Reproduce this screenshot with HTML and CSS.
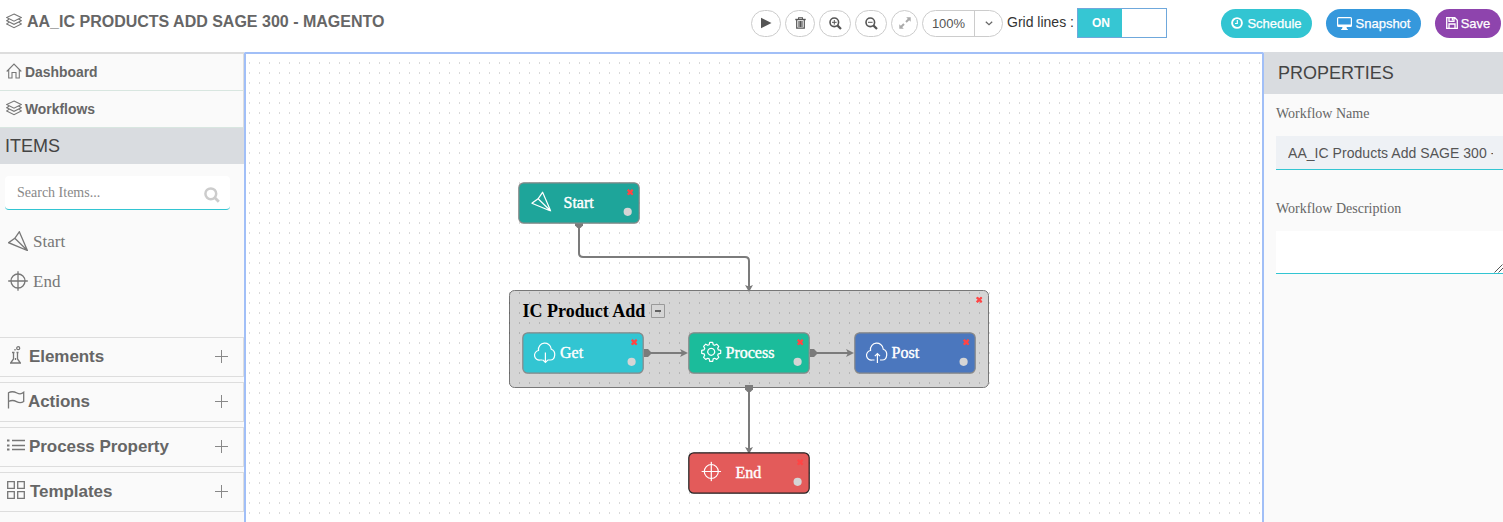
FILE: index.html
```html
<!DOCTYPE html>
<html lang="en">
<head>
<meta charset="utf-8">
<title>Workflow designer</title>
<link rel="stylesheet" href="styles.css">
</head>
<body>
<svg class="defs" aria-hidden="true">
  <symbol id="layers" viewBox="0 0 16 16"><path d="M8 1 15.300 4.600 8 8.200.7 4.600ZM3 6.200.7 7.700 8 11.300 15.300 7.700 13 6.200M3 9.400.7 10.900 8 14.700 15.300 10.900 13 9.400"/></symbol>
  <symbol id="plane" viewBox="0 0 20 20"><path d="M11.300.8 19.400 19.500.6 11.700 6.800 7.300ZM6.800 7.300 19.400 19.500"/></symbol>
  <symbol id="target" viewBox="0 0 20 20"><circle cx="10" cy="10" r="7"/><path d="M10 .2V19.800M.2 10H19.800"/></symbol>
  <symbol id="plus" viewBox="0 0 13 13"><path d="M6.500 0V13M0 6.500H13"/></symbol>
  <symbol id="remove" viewBox="0 0 6 6"><path d="M.7.7 5.300 5.300M5.300.7.7 5.300"/></symbol>
</svg>
<header class="header">
  <h1 class="title"><svg class="line title-icon"><use href="#layers"/></svg>AA_IC PRODUCTS ADD SAGE 300 - MAGENTO</h1>
  <div class="tools">
    <button class="tool w30"><svg width="12" height="12" viewBox="0 0 12 12"><path d="M1 .8 11.500 6 1 11.200Z" fill="#555"/></svg></button>
    <button class="tool w30"><svg width="11" height="12" viewBox="0 0 11 12" fill="none" stroke="#555"><path d="M.3 2.500H10.700" stroke-width="1.400"/><path d="M3.600 2V.7H7.400V2" stroke-width="1.100"/><path d="M1.700 3V11.200H9.300V3M4 4V10M5.500 4V10M7 4V10" stroke-width="1.200"/></svg></button>
    <button class="tool w32"><svg width="13" height="13" viewBox="0 0 13 13" fill="none" stroke="#555"><circle cx="5.300" cy="5.300" r="4.300" stroke-width="1.600"/><path d="m8.600 8.600 3.400 3.400" stroke-width="2.200"/><path d="M5.300 3V7.600M3 5.300H7.600"/></svg></button>
    <button class="tool w32"><svg width="13" height="13" viewBox="0 0 13 13" fill="none" stroke="#555"><circle cx="5.300" cy="5.300" r="4.300" stroke-width="1.600"/><path d="m8.600 8.600 3.400 3.400" stroke-width="2.200"/><path d="M3 5.300H7.600"/></svg></button>
    <button class="tool w27"><svg width="12" height="12" viewBox="0 0 12 12"><path d="M7.200.3H11.700V4.800ZM.3 7.200V11.700H4.800Z" fill="#aaa"/><path d="M10.300 1.700 7 5M5 7 1.700 10.300" stroke="#aaa" stroke-width="2"/></svg></button>
    <div class="tool zoom"><span class="zoom-value">100%</span><span class="zoom-arrow"><svg width="8" height="5" viewBox="0 0 8 5"><path d="m.8.8 3.200 3 3.200-3" fill="none" stroke="#666" stroke-width="1.200"/></svg></span></div>
    <span class="grid-label">Grid lines :</span>
    <div class="switch"><span class="switch-on">ON</span></div>
  </div>
  <div class="actions">
    <button class="action schedule"><svg width="12" height="12" viewBox="0 0 12 12" fill="none" stroke="#fff"><circle cx="6" cy="6" r="4.900" stroke-width="1.900"/><path d="M6.300 3V6.500H4" stroke-width="1.200"/></svg>Schedule</button>
    <button class="action snapshot"><svg width="15" height="13" viewBox="0 0 15 13"><path d="M1.500 0h12A1.500 1.500 0 0 1 15 1.500v7A1.500 1.500 0 0 1 13.500 10H9.500L10 12h.8v1H4.200V12H5L5.500 10h-4A1.500 1.500 0 0 1 0 8.500v-7A1.500 1.500 0 0 1 1.500 0ZM1.200 1.200V7.500H13.800V1.200Z" fill="#fff" fill-rule="evenodd"/></svg>Snapshot</button>
    <button class="action save"><svg width="12" height="12" viewBox="0 0 12 12" fill="none" stroke="#fff" stroke-width="1.300"><path d="M.7.7H8.800L11.300 3.200V11.300H.7ZM3 .7V4.300H8V.7M3 11V7H9V11"/><path d="M6.500 1V3.500" stroke-width="1.500"/></svg>Save</button>
  </div>
</header>
<main class="main">
  <aside class="sidebar">
    <nav class="nav">
      <a class="nav-link"><svg class="line nav-icon" viewBox="0 0 16 16"><path d="M.7 8.500 8 1l7.300 7.500M2.700 7V15H6V9.500H10V15H13.300V7"/></svg>Dashboard</a>
      <a class="nav-link"><svg class="line nav-icon"><use href="#layers"/></svg>Workflows</a>
    </nav>
    <h2 class="section-title items-title">ITEMS</h2>
    <div class="search"><span>Search Items...</span><svg width="16" height="16" viewBox="0 0 16 16" fill="none" stroke="#ccc"><circle cx="6.800" cy="6.800" r="5.400" stroke-width="2.500"/><path d="m10.800 10.800 4 4" stroke-width="2.800"/></svg></div>
    <ul class="items">
      <li class="item"><svg class="line item-icon"><use href="#plane"/></svg>Start</li>
      <li class="item"><svg class="line item-icon"><use href="#target"/></svg>End</li>
    </ul>
    <div class="groups">
      <div class="group"><svg class="line group-icon elements-icon" viewBox="0 0 18 18"><path d="M4 17H15M7.500 6.500V13L5 16.500M11.500 6.500V13L14 16.500M6 6.500H8.500M10.500 6.500H12.500M9.500 12V14M9 4.500V3"/><circle cx="12.200" cy="2.200" r="1.500"/></svg><span>Elements</span><svg class="line plus"><use href="#plus"/></svg></div>
      <div class="group"><svg class="line group-icon actions-icon" viewBox="0 0 18 18"><path d="M1.500 17.500V1.800C5-.3 8 1 10 2S15 2.800 16.700 1.300V10.500C14.500 12 12 12 9.500 10.600S4 9.300 1.500 10.500"/></svg><span>Actions</span><svg class="line plus"><use href="#plus"/></svg></div>
      <div class="group"><svg class="line group-icon process-icon" viewBox="0 0 18 18"><path d="M5 4.500H18M5 9.500H18M5 13.500H18"/><path d="M0 4.500H2.500M0 9.500H2.500M0 13.500H2.500" stroke-width="2"/></svg><span>Process Property</span><svg class="line plus"><use href="#plus"/></svg></div>
      <div class="group"><svg class="line group-icon templates-icon" viewBox="0 0 18 18"><path d="M.7.7H7.300V7.300H.7ZM10.700.7H17.300V7.300H10.700ZM.7 10.700H7.300V17.300H.7ZM10.700 10.700H17.300V17.300H10.700Z"/></svg><span>Templates</span><svg class="line plus"><use href="#plus"/></svg></div>
    </div>
  </aside>
  <section class="canvas">
    <svg class="diagram" viewBox="246 54 1016 468">
      <defs>
        <pattern id="dots" x="249" y="52" width="10" height="10" patternUnits="userSpaceOnUse"><rect width="1" height="2" fill="#000" fill-opacity=".15"/></pattern>
      </defs>
      <rect x="509.500" y="290.500" width="479" height="97" rx="5" fill="#d5d5d5" stroke="#777"/>
      <rect x="246" y="54" width="1016" height="468" fill="url(#dots)"/>

      <g class="wire">
        <path d="M579 224V253Q579 257 583 257H745Q749 257 749 261V290"/>
        <path d="M749 388V452"/>
        <path d="M646 353H685M812 353H851"/>
      </g>
      <g fill="#7b7b7b">
        <path d="M575 223H583V225.500L580.500 228H577.500L575 225.500Z"/>
        <path d="M745 385H753V389.500L750.500 392H747.500L745 389.500Z"/>
        <path d="M644 349H648L651 352V354L648 357H644ZM810 349H814L817 352V354L814 357H810Z"/>
        <path d="M749 292 745 285 749 286.500 753 285ZM749 454 745 447 749 448.500 753 447ZM688 353 680 349 682 353 680 357ZM854 353 846 349 848 353 846 357Z"/>
      </g>

      <text class="group-label" x="522.500" y="317">IC Product Add</text>
      <path d="M651.500 304.500H664.500V317.500H651.500Z" fill="none" stroke="#999"/>
      <path d="M655 311H661" stroke="#555" stroke-width="1.800"/>

      <g class="node">
        <rect x="518.800" y="182.800" width="120.400" height="40.400" rx="5" fill="#1ea59a"/>
        <svg x="531.300" y="191.500" width="20" height="20"><use href="#plane"/></svg>
        <text x="563.500" y="208">Start</text>
        <circle cx="627.700" cy="211.800" r="4.100"/>
      </g>
      <g class="node">
        <rect x="522.800" y="332.800" width="120.400" height="40.400" rx="5" fill="#32c5d2"/>
        <path d="M542.500 360H540.200A4.800 4.800 0 0 1 538.500 350.500C537.500 341.500 550.300 340.500 551.300 349.200C556.500 351 555.500 360 550.300 360H548M545.400 352.500V362.500M542.800 359.800 545.400 362.500 548 359.800"/>
        <text x="560" y="358">Get</text>
        <circle cx="631.600" cy="361.800" r="4.100"/>
      </g>
      <g class="node">
        <rect x="688.800" y="332.800" width="120.400" height="40.400" rx="5" fill="#1bbc9b"/>
        <path transform="translate(711.200 351.800)" stroke-linejoin="round" d="M-2-7.100-1.500-9.500H1.500L2-7.100 3.400-6.500 5.500-7.600 7.600-5.500 6.500-3.400 7.100-2 9.500-1.500V1.500L7.100 2 6.500 3.400 7.600 5.500 5.500 7.600 3.400 6.500 2 7.100 1.500 9.500H-1.500L-2 7.100-3.400 6.500-5.500 7.600-7.600 5.500-6.500 3.400-7.100 2-9.500 1.500V-1.500L-7.100-2-6.500-3.400-7.600-5.500-5.500-7.600-3.400-6.500Z"/>
        <path d="M711.200 348.300A3.500 3.500 0 1 1 711.190 348.300Z"/>
        <text x="725.500" y="358">Process</text>
        <circle cx="797.600" cy="361.800" r="4.100"/>
      </g>
      <g class="node">
        <rect x="854.800" y="332.800" width="120.400" height="40.400" rx="5" fill="#4b77be"/>
        <path d="M874.500 360H872.200A4.800 4.800 0 0 1 870.500 350.500C869.500 341.500 882.300 340.500 883.300 349.200C888.500 351 887.500 360 882.300 360H880M877.400 363V353.500M874.800 356.200 877.400 353.500 880 356.200"/>
        <text x="891.500" y="358">Post</text>
        <circle cx="963.600" cy="361.800" r="4.100"/>
      </g>
      <g class="node end">
        <rect x="688.800" y="452.800" width="120.400" height="40.400" rx="5" fill="#e35b5a"/>
        <svg x="701.300" y="461.500" width="20" height="20"><use href="#target"/></svg>
        <text x="735.500" y="478">End</text>
        <circle cx="797.600" cy="481.800" r="4.100"/>
      </g>
      <g class="removes">
        <use href="#remove" x="627" y="189" width="6.500" height="6.500"/>
        <use href="#remove" x="631" y="339" width="6.500" height="6.500"/>
        <use href="#remove" x="797" y="339" width="6.500" height="6.500"/>
        <use href="#remove" x="963" y="339" width="6.500" height="6.500"/>
        <use href="#remove" x="976" y="296.500" width="6.500" height="6.500"/>
        <use href="#remove" x="797" y="459" width="6.500" height="6.500"/>
      </g>
    </svg>
  </section>
  <aside class="properties">
    <h2 class="section-title properties-title">PROPERTIES</h2>
    <div class="form">
      <label class="label">Workflow Name</label>
      <div class="input"><span class="input-text">AA_IC Products Add SAGE 300 -</span></div>
      <label class="label description-label">Workflow Description</label>
      <div class="textarea"><svg width="9" height="9" viewBox="0 0 9 9"><path d="M.5 8.500 8.500.5M4.500 8.500 9 4" stroke="#555"/></svg></div>
    </div>
  </aside>
</main>
</body>
</html>
```
FILE: styles.css
```css
* { box-sizing: border-box; }
body { margin: 0; height: 522px; overflow: hidden; display: flex; flex-direction: column; background: #fff; font-family: "Liberation Sans", Arial, sans-serif; color: #666; }
h1, h2, ul { margin: 0; padding: 0; font-weight: normal; list-style: none; }
button { font: inherit; padding: 0; }
.defs { display: none; }
.line { fill: none; stroke: #777; stroke-width: 1.1; flex: none; }

.header { height: 52px; flex: none; display: flex; align-items: flex-start; }
.title { width: 751px; padding: 12px 0 0 6px; display: flex; gap: 5px; font-size: 16px; line-height: 19px; font-weight: bold; color: #666; }
.title-icon { width: 16px; height: 16px; margin-top: 1px; }
.tools { width: 470px; display: flex; align-items: center; gap: 4px; padding-top: 8px; height: 38px; }
.tool { height: 27px; border: 1px solid #ccc; border-radius: 14px; background: #fff; display: flex; align-items: center; justify-content: center; flex: none; }
.w30 { width: 30px; }
.w32 { width: 32px; }
.w27 { width: 27px; }
.zoom { width: 81px; font-size: 13px; color: #555; align-items: stretch; }
.zoom-value { width: 52px; line-height: 25px; text-align: center; border-right: 1px solid #ccc; }
.zoom-arrow { flex: 1; display: flex; align-items: center; justify-content: center; }
.grid-label { width: 66px; font-size: 14px; line-height: 16px; padding-bottom: 2px; color: #333; white-space: nowrap; }
.switch { width: 90px; height: 30px; border: 1px solid #6fa8dc; flex: none; }
.switch-on { display: block; width: 44px; height: 28px; line-height: 28px; background: #36c6d3; color: #fff; font-size: 12px; font-weight: bold; text-align: center; padding-left: 2px; }
.actions { display: flex; gap: 14px; padding-top: 9px; }
.action { height: 29px; border: 0; border-radius: 15px; color: #fff; font-size: 13px; display: flex; align-items: center; justify-content: center; gap: 4px; -webkit-text-stroke: .25px #fff; }
.action svg { margin-top: -1px; }
.schedule { width: 91px; background: #32c5d2; }
.snapshot { width: 95px; background: #3598dc; }
.save { width: 66px; background: #8e44ad; gap: 3px; }

.main { flex: 1; display: grid; grid-template-columns: 244px 1020px 239px; min-height: 0; }
.sidebar { background: #fafafa; border-top: 2px solid #ddd; overflow: hidden; }
.nav { border-right: 1px solid #ddd; }
.nav-link { height: 37px; padding-left: 6px; display: flex; align-items: center; gap: 3px; border-bottom: 1px solid #d8e6e0; font-size: 13.900px; font-weight: bold; }
.nav-icon { width: 16px; height: 16px; margin-bottom: 2px; }
.section-title { background: #d9dce0; color: #444; font-size: 18px; }
.items-title { height: 36px; padding-left: 5px; line-height: 36px; }
.search { width: 225px; height: 34px; margin: 12px 0 0 5px; padding: 0 10px 0 12px; display: flex; align-items: center; justify-content: space-between; background: #fff; border-bottom: 1px solid #32c5d2; border-radius: 4px; font: 14px "Liberation Serif", serif; color: #888; }
.search svg { margin-top: 4px; }
.items { padding: 12px 0 0 8px; }
.item { height: 40px; display: flex; align-items: center; gap: 5px; font: 17px "Liberation Serif", serif; color: #777; }
.item-icon { width: 20px; height: 20px; margin-bottom: 2px; }
.item .line { stroke-width: 1.300; }
.groups { display: flex; flex-direction: column; gap: 5px; padding-top: 35px; }
.group { height: 40px; border: 1px solid #ddd; border-left: 0; padding: 0 15px 0 7px; display: flex; align-items: center; font-size: 17px; font-weight: bold; }
.group span { letter-spacing: -.06px; }
.group-icon { width: 18px; height: 18px; margin-right: 4px; margin-bottom: 4px; stroke-width: 1.300; }
.elements-icon { margin-left: -1px; margin-right: 5px; }
.actions-icon { margin-right: 3px; }
.templates-icon { margin-right: 5px; }
.plus { width: 13px; height: 13px; margin-left: auto; margin-bottom: 1px; stroke: #888; stroke-width: 1; }

.canvas { border: 2px solid #a1bff7; border-bottom: 0; border-radius: 2px 2px 0 0; overflow: hidden; }
.diagram { display: block; width: 1016px; height: 468px; font-family: "Liberation Serif", serif; }
.wire { fill: none; stroke: #7b7b7b; stroke-width: 2; }
.group-label { font-size: 18px; font-weight: bold; fill: #000; }
.node { fill: none; stroke: #fff; stroke-width: 1.200; }
.node rect { stroke: #888; }
.end rect { stroke: #222; }
.node text { fill: #fff; stroke-width: .4; font-size: 16px; }
.node > circle { fill: #d5d5d5; stroke: none; }
#target circle { fill: none; stroke: inherit; }
.removes { stroke: #ff4545; stroke-width: 2.200; }

.properties { background: #fafafa; overflow: hidden; }
.properties-title { height: 42px; padding-left: 14px; line-height: 42px; }
.form { padding: 11px 0 0 12px; display: flex; flex-direction: column; }
.label { font: 14px/17px "Liberation Serif", serif; color: #666; }
.input { height: 34px; margin-top: 14px; padding: 0 10px 0 12px; background: #eef1f5; border-bottom: 1px solid #32c5d2; font-size: 14px; line-height: 34px; color: #555; }
.input-text { display: block; overflow: hidden; white-space: nowrap; letter-spacing: .04px; }
.description-label { margin-top: 30px; }
.textarea { height: 43px; margin-top: 14px; background: #fff; border-bottom: 1px solid #32c5d2; display: flex; align-items: flex-end; justify-content: flex-end; }
```
